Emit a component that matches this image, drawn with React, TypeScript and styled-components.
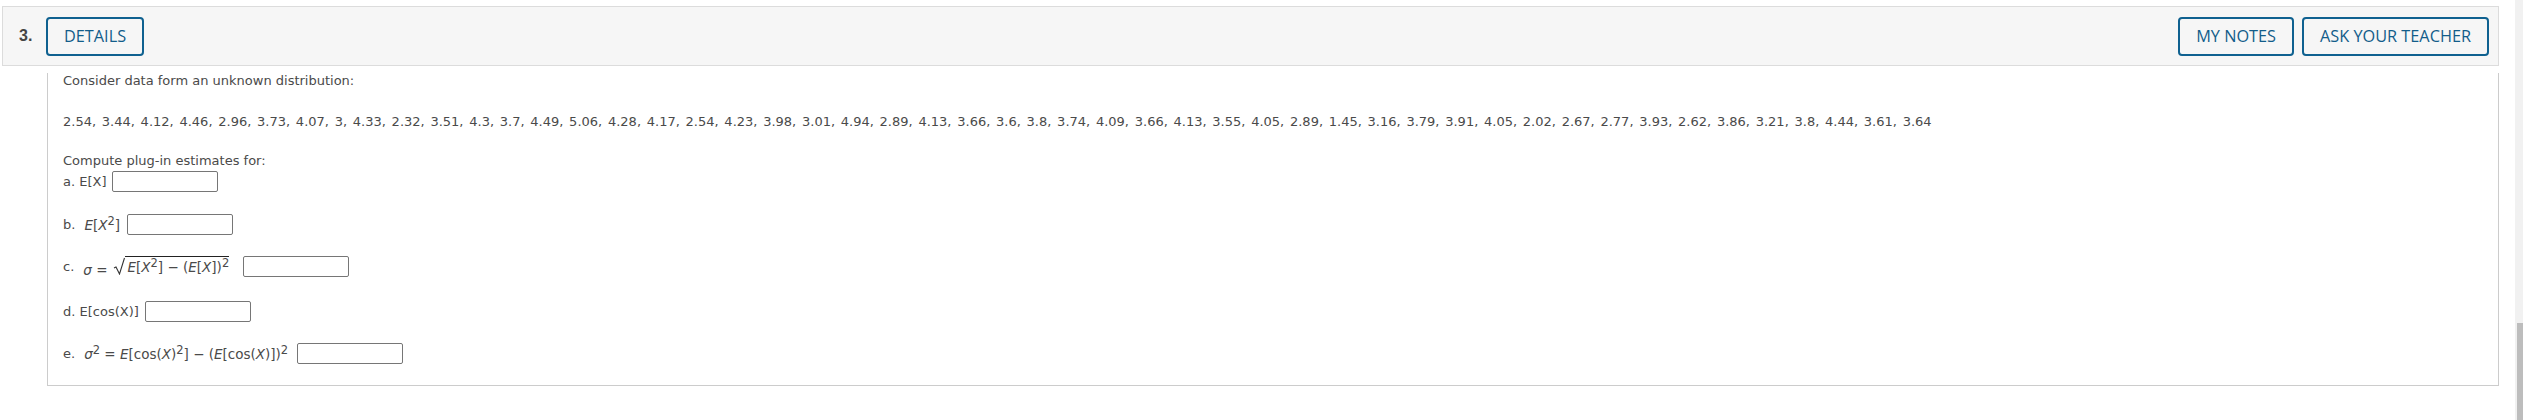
import styled, { createGlobalStyle } from 'styled-components'

const GlobalStyle = createGlobalStyle`
  html, body {
    margin: 0;
    padding: 0;
    background: #fff;
    overflow: hidden;
  }
`

const Page = styled.div`
  display: flex;
  width: 2523px;
  height: 420px;
  background: #fff;
`

const Main = styled.div`
  flex: 1;
  padding: 6px 16px 0 2px;
  min-width: 0;
`

const ScrollTrack = styled.div`
  width: 8px;
  display: flex;
  flex-direction: column;
  justify-content: flex-end;
  align-items: flex-end;
  background: #f1f1f1;
`

const ScrollThumb = styled.div`
  width: 6px;
  height: 97px;
  background: #bdbdbd;
`

const Header = styled.div`
  display: flex;
  align-items: center;
  height: 60px;
  box-sizing: border-box;
  padding: 0 9px 0 16px;
  background: #f6f6f6;
  border: 1px solid #dcdcdc;
`

const QuestionNumber = styled.span`
  width: 27px;
  font-family: 'Liberation Sans', Arial, sans-serif;
  font-size: 16px;
  font-weight: 700;
  color: #444;
`

const OutlineButton = styled.button`
  height: 39px;
  box-sizing: border-box;
  padding: 0 16px;
  background: transparent;
  border: 2px solid #0f6190;
  border-radius: 4px;
  font-family: 'Open Sans', sans-serif;
  font-size: 16.3px;
  font-weight: 500;
  color: #125d8a;
`

const HeaderRight = styled.div`
  display: flex;
  gap: 8px;
  margin-left: auto;
`

const Content = styled.div`
  margin-left: 45px;
  height: 313px;
  box-sizing: border-box;
  padding: 0 0 0 15px;
  border: 1px solid #cccccc;
  border-top: none;
  font-family: 'DejaVu Sans', Verdana, sans-serif;
  font-size: 13px;
  color: #4a4a4a;
`

const Line = styled.div<{ $top: number; $wordSpacing?: number }>`
  height: 16px;
  line-height: 16px;
  margin-top: ${props => props.$top}px;
  word-spacing: ${props => props.$wordSpacing || 0}px;
  white-space: nowrap;
`

const AnswerRow = styled.div<{ $top: number }>`
  display: flex;
  align-items: center;
  height: 21px;
  margin-top: ${props => props.$top}px;
  white-space: nowrap;
`

const Label = styled.span<{ $gap: number }>`
  margin-right: ${props => props.$gap}px;
`

const MathText = styled.span<{ $left: number; $gap: number }>`
  display: inline-flex;
  align-items: baseline;
  margin-left: ${props => props.$left}px;
  margin-right: ${props => props.$gap}px;
  font-size: 13.5px;
  white-space: pre;
`

const Var = styled.i`
  font-style: italic;
`

const Sup = styled.sup`
  font-size: 11.5px;
  line-height: 0;
  vertical-align: baseline;
  position: relative;
  top: -5px;
`

const Radical = styled.span`
  display: inline-flex;
  align-items: flex-end;
  margin-left: 6px;
`

const RadicalBody = styled.span`
  display: inline-block;
  border-top: 1px solid #222;
  padding: 3px 0 0 2px;
  line-height: 15px;
`

const AnswerInput = styled.input`
  width: 106px;
  height: 21px;
  box-sizing: border-box;
  margin: 0;
  padding: 0 4px;
  background: #fff;
  border: 1px solid #767676;
  border-radius: 2px;
`

const DATA =
  '2.54, 3.44, 4.12, 4.46, 2.96, 3.73, 4.07, 3, 4.33, 2.32, 3.51, 4.3, 3.7, 4.49, 5.06, 4.28, 4.17, 2.54, 4.23, 3.98, 3.01, 4.94, 2.89, 4.13, 3.66, 3.6, 3.8, 3.74, 4.09, 3.66, 4.13, 3.55, 4.05, 2.89, 1.45, 3.16, 3.79, 3.91, 4.05, 2.02, 2.67, 2.77, 3.93, 2.62, 3.86, 3.21, 3.8, 4.44, 3.61, 3.64'

export default function App() {
  return (
    <Page>
      <GlobalStyle />
      <Main>
        <Header>
          <QuestionNumber>3.</QuestionNumber>
          <OutlineButton>DETAILS</OutlineButton>
          <HeaderRight>
            <OutlineButton>MY NOTES</OutlineButton>
            <OutlineButton>ASK YOUR TEACHER</OutlineButton>
          </HeaderRight>
        </Header>
        <Content>
          <Line $top={7}>Consider data form an unknown distribution:</Line>
          <Line $top={25} $wordSpacing={1.6}>{DATA}</Line>
          <Line $top={23}>Compute plug-in estimates for:</Line>
          <AnswerRow $top={2}>
            <Label $gap={5}>a. E[X]</Label>
            <AnswerInput />
          </AnswerRow>
          <AnswerRow $top={22}>
            <Label $gap={0}>b.</Label>
            <MathText $left={9} $gap={7}>
              <Var>E</Var>[<Var>X</Var><Sup>2</Sup>]
            </MathText>
            <AnswerInput />
          </AnswerRow>
          <AnswerRow $top={21}>
            <Label $gap={0}>c.</Label>
            <MathText $left={9} $gap={14}>
              <Var>σ</Var> =
              <Radical>
                <svg width="12" height="18" viewBox="0 0 12 18">
                  <path d="M1 11 L3 10 L6.5 17 L11.5 1" fill="none" stroke="#333" strokeWidth="1.1" />
                </svg>
                <RadicalBody>
                  <Var>E</Var>[<Var>X</Var><Sup>2</Sup>] − (<Var>E</Var>[<Var>X</Var>])<Sup>2</Sup>
                </RadicalBody>
              </Radical>
            </MathText>
            <AnswerInput />
          </AnswerRow>
          <AnswerRow $top={24}>
            <Label $gap={6}>d. E[cos(X)]</Label>
            <AnswerInput />
          </AnswerRow>
          <AnswerRow $top={21}>
            <Label $gap={0}>e.</Label>
            <MathText $left={9} $gap={9}>
              <Var>σ</Var><Sup>2</Sup> = <Var>E</Var>[cos(<Var>X</Var>)<Sup>2</Sup>] − (<Var>E</Var>[cos(<Var>X</Var>)])<Sup>2</Sup>
            </MathText>
            <AnswerInput />
          </AnswerRow>
        </Content>
      </Main>
      <ScrollTrack>
        <ScrollThumb />
      </ScrollTrack>
    </Page>
  )
}
